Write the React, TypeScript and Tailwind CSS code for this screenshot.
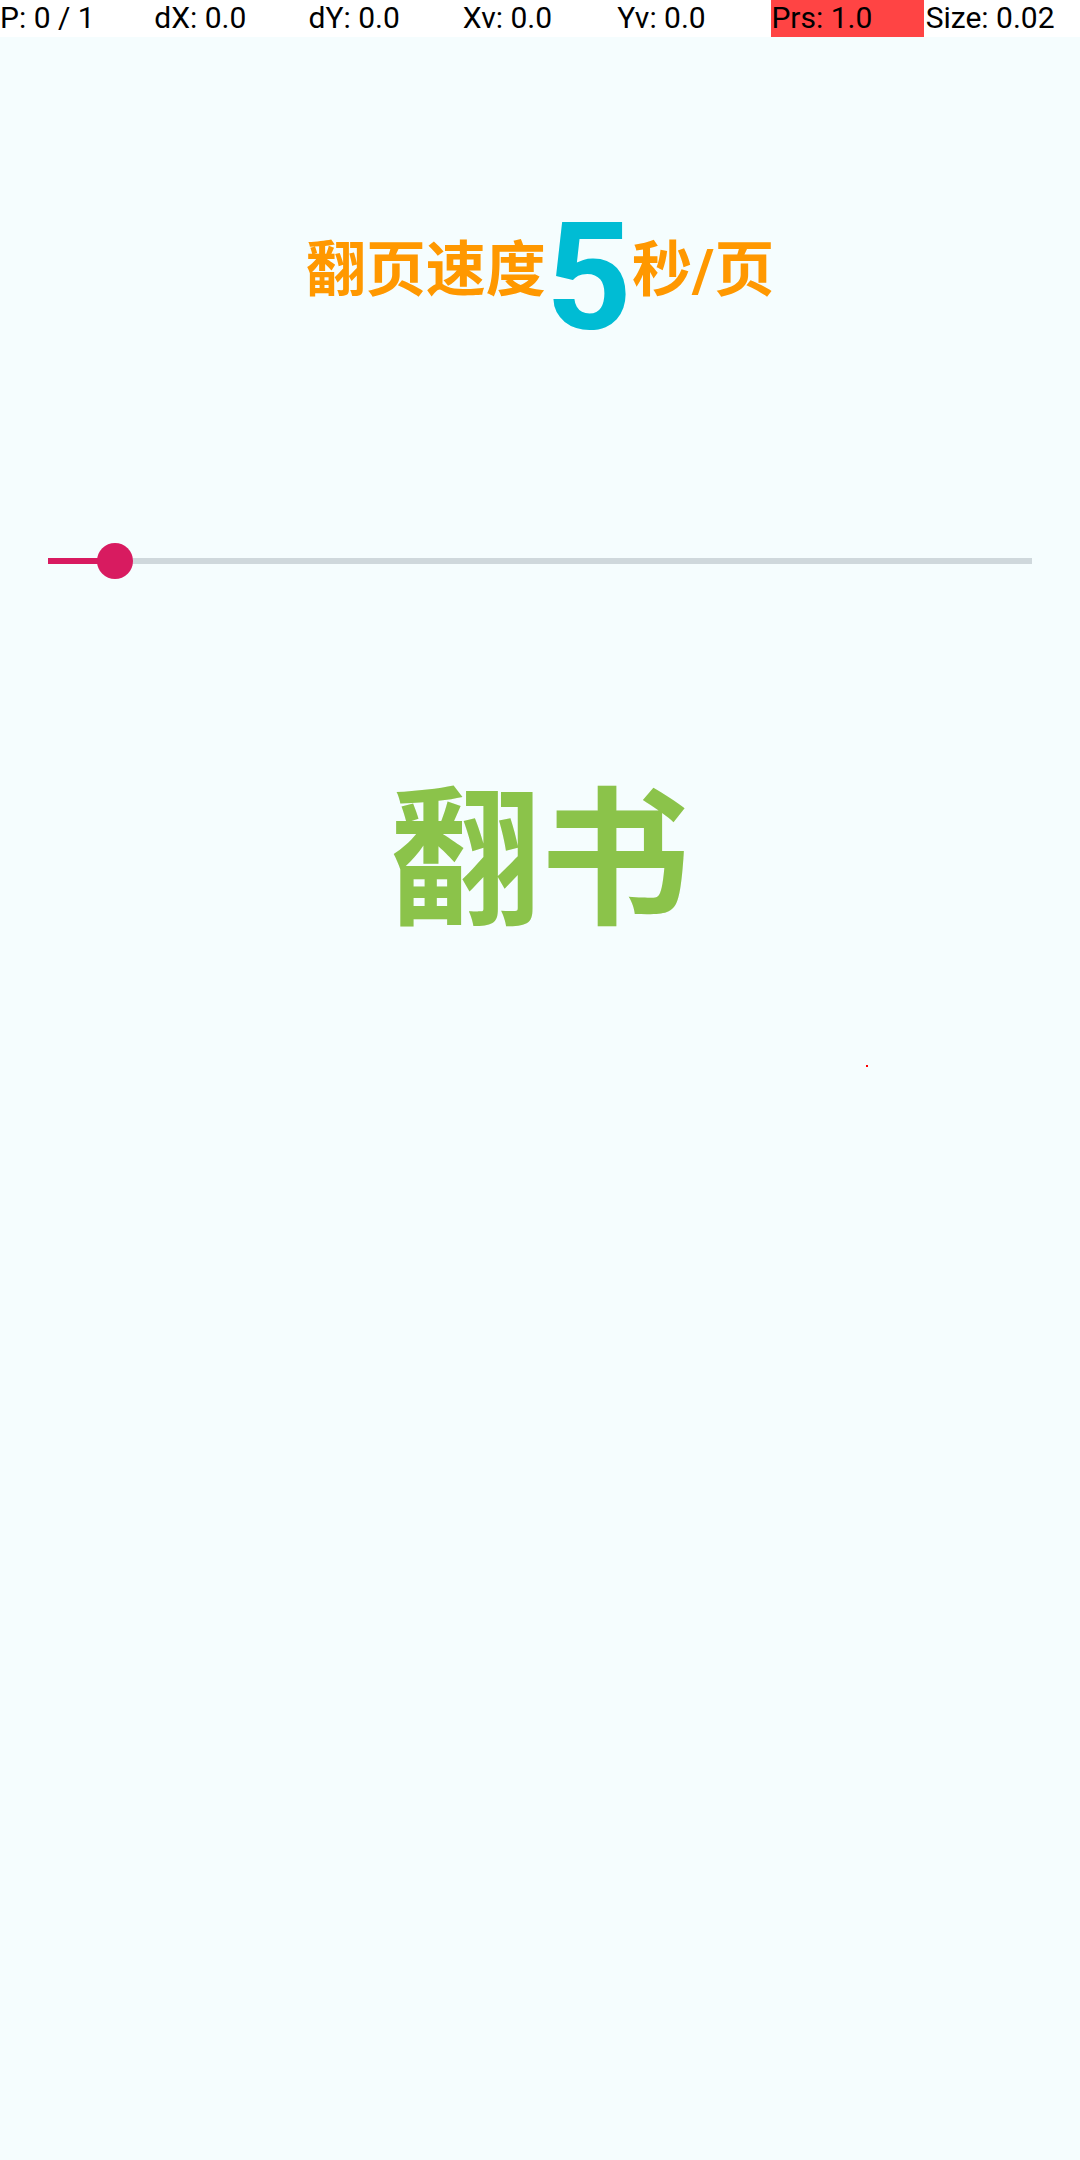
import React from "react";

const stats = [
  { label: "P: 0 / 1" },
  { label: "dX: 0.0" },
  { label: "dY: 0.0" },
  { label: "Xv: 0.0" },
  { label: "Yv: 0.0" },
  { label: "Prs: 1.0", alert: true },
  { label: "Size: 0.02" },
];

const StatBar = () => (
  <div className="grid h-[37px] grid-cols-7 bg-white">
    {stats.map((s) => (
      <div
        key={s.label}
        className={`h-[37px] overflow-hidden whitespace-nowrap text-[30px] leading-[36px] text-black ${
          s.alert ? "mr-[2px] bg-[#ff4444]" : ""
        }`}
      >
        {s.label}
      </div>
    ))}
  </div>
);

const SpeedSlider = ({ value }: { value: number }) => {
  // thumb center sits at value% of the track
  return (
    <div className="mx-[48px] flex h-[36px] items-center">
      <div className="relative h-[6px] w-full bg-[#cfd8dc]">
        <div
          className="absolute left-0 top-0 h-[6px] bg-[#d81b60]"
          style={{ width: `${value}%` }}
        />
        <div
          className="absolute top-[-15px] h-[36px] w-[36px] -translate-x-1/2 rounded-full bg-[#d81b60]"
          style={{ left: `${value}%` }}
        />
      </div>
    </div>
  );
};

export default function App() {
  const seconds = 5;

  return (
    <div className="relative flex h-[2160px] w-full flex-col bg-[#f5fdfe] font-['Roboto','Noto_Sans_CJK_SC',sans-serif]">
      <StatBar />

      <div className="mt-[154px] flex h-[160px] items-center justify-center">
        <span className="text-[60px] font-bold leading-none text-[#ff9800]">
          翻页速度
        </span>
        <span className="mt-[14px] text-[150px] font-bold leading-none text-[#00bcd4]">
          {seconds}
        </span>
        <span className="text-[60px] font-bold leading-none text-[#ff9800]">
          秒/页
        </span>
      </div>

      <div className="mt-[192px]">
        <SpeedSlider value={6.8} />
      </div>

      <div className="mt-[208px] flex h-[150px] items-center justify-center">
        <span className="text-[150px] font-bold leading-none text-[#8bc34a]">
          翻书
        </span>
      </div>

      <div className="absolute left-[866px] top-[1065px] h-[2px] w-[2px] bg-[#ff0000]" />
    </div>
  );
}
